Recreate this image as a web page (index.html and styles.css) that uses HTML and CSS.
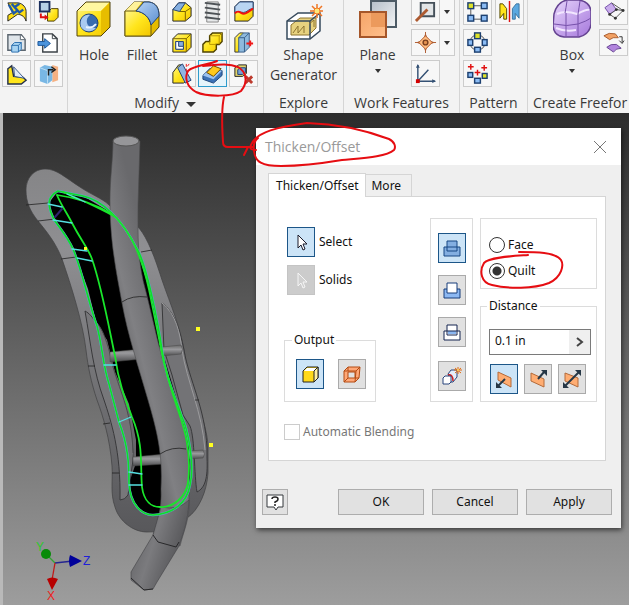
FILE: index.html
```html
<!DOCTYPE html>
<html lang="en">
<head>
<meta charset="utf-8">
<title>Thicken/Offset</title>
<link rel="stylesheet" href="styles.css">
</head>
<body>
<svg class="defs" aria-hidden="true">
  <defs>
    <linearGradient id="gold" x1="0" y1="0" x2="1" y2="1"><stop offset="0" stop-color="#fff58a"/><stop offset=".5" stop-color="#ffe51c"/><stop offset="1" stop-color="#f2c500"/></linearGradient>
    <linearGradient id="blue" x1="0" y1="0" x2="1" y2="1"><stop offset="0" stop-color="#b8d4f5"/><stop offset="1" stop-color="#5b8fd0"/></linearGradient>
    <linearGradient id="steel" x1="0" y1="0" x2="1" y2="1"><stop offset="0" stop-color="#b4bec8"/><stop offset="1" stop-color="#f4f5f6"/></linearGradient>
    <linearGradient id="orange" x1="0" y1="0" x2="1" y2="1"><stop offset="0" stop-color="#f5a468"/><stop offset="1" stop-color="#ffc08c"/></linearGradient>
    <linearGradient id="purple" x1="0" y1="0" x2="1" y2="1"><stop offset="0" stop-color="#e6d4fb"/><stop offset="1" stop-color="#a678dc"/></linearGradient>
  </defs>
</svg>

<header class="ribbon">
  <section class="panel panel-create">
    <div class="tools">
      <div class="grid two">
        <button class="tool" aria-label="Emboss"><svg viewBox="0 0 24 24"><path d="M3 3h11c5 1 8 5 8 9v10c-2-6-6-7-9-7l-10 7v-6l5-3z" fill="#ffdf12" stroke="#222"/><path d="M4 5l5 9 4-3M7 4l8 9 4-3M9 8l6-4" fill="none" stroke="#1f5aa8" stroke-width="2.5"/></svg></button>
        <button class="tool" aria-label="Derive"><svg viewBox="0 0 24 24"><path d="M11 13l4-4h7v9l-4 4h-7z" fill="url(#gold)" stroke="#4a3c00"/><rect x="3" y="2" width="10" height="10" fill="#b6d0e6" stroke="#1b2f5c" stroke-width="2"/><path d="M4 14v4h5" fill="none" stroke="#e01010" stroke-width="2"/><path d="M8 15l4 3-4 3z" fill="#e01010"/></svg></button>
        <button class="tool" aria-label="Decal"><svg viewBox="0 0 24 24"><path d="M3 4h14l4 5v11H3z" fill="#dfe5ea" stroke="#5c6670" stroke-width="1.5"/><path d="M16 4v5h5" fill="#fff" stroke="#5c6670"/><path d="M7 15l3-3h7v7l-3 3H7z" fill="#a8d4f2" stroke="#2c6fae"/><path d="M7 15h7v7M14 15l3-3" fill="none" stroke="#2c6fae"/></svg></button>
        <button class="tool" aria-label="Import"><svg viewBox="0 0 24 24"><path d="M6 3h10l5 5v14H6z" fill="#fff" stroke="#3d4348" stroke-width="1.5"/><path d="M16 3v5h5" fill="none" stroke="#3d4348"/><path d="M1 11h7V8l6 5-6 5v-3H1z" fill="#4c94dc" stroke="#1b5699"/></svg></button>
        <button class="tool" aria-label="Rib"><svg viewBox="0 0 24 24"><path d="M3 7l4-3 2 11 10 1 3 3-5 4H3z" fill="#ffe51c" stroke="#26324a" stroke-width="1.5"/><path d="M9 5l11 12-10-2z" fill="#dfeaf8" stroke="#395888"/></svg></button>
        <button class="tool" aria-label="Unwrap"><svg viewBox="0 0 24 24"><path d="M16 3l6 2v14l-6 2z" fill="#f5b183"/><path d="M3 6l5-3 8 2v14l-5 4-8-3z" fill="#79b7e4"/><path d="M3 6l8 3v14" fill="none" stroke="#bfe0f5"/><path d="M12 14V8h5M15 5l4 3-4 3" fill="none" stroke="#222" stroke-width="1.5"/></svg></button>
      </div>
    </div>
  </section>

  <section class="panel panel-modify">
    <div class="tools">
      <button class="big"><svg viewBox="0 0 38 38"><path d="M2 11L11 2h24v25l-9 9H2z" fill="url(#gold)"/><path d="M2 11L11 2h24l-9 9z" fill="#fff7a0"/><path d="M26 11l9-9v25l-9 9z" fill="#e7bd00"/><path d="M2 11L11 2h24v25l-9 9H2z" fill="none" stroke="#51430c"/><circle cx="14" cy="23" r="9" fill="#386cae" stroke="#214276"/><path d="M6 27C4 18 10 14 15 15q-4 3-3 8t9 5c-4 5-12 4-15-1z" fill="#a9caf0"/><path d="M11 27q6 2 10-3" stroke="#e8f3ff" stroke-width="2" fill="none"/></svg><span>Hole</span></button>
      <button class="big"><svg viewBox="0 0 38 38"><path d="M2 11l9-9h15c7 1 10 6 10 13v12l-8 9H2z" fill="#e5bb00" stroke="#51430c"/><path d="M2 11l9-9h8l-7 9z" fill="#fff29a"/><path d="M2 11h11c9 1 14 8 15 14v11H2z" fill="url(#gold)" stroke="#6b5a10"/><path d="M13 11l8-9h5c7 1 10 6 10 14l-8 9C27 18 21 12 13 11z" fill="url(#blue)" stroke="#214276"/></svg><span>Fillet</span></button>
      <div class="grid three">
        <button class="tool" aria-label="Chamfer"><svg viewBox="0 0 24 24"><path d="M3 10l6-7h7l6 5v9l-6 5H3z" fill="url(#gold)" stroke="#222"/><path d="M3 10l6-7h7l-6 9z" fill="#85afe0" stroke="#214276"/><path d="M10 12h6v10M16 12l6-4" fill="none" stroke="#765e00"/></svg></button>
        <button class="tool" aria-label="Thread"><svg viewBox="0 0 24 24"><path d="M6 2h12v21H6z" fill="#e6e8e9" stroke="#888"/><path d="M4 3l16 2M4 8l16 2M4 13l16 2M4 18l16 2" stroke="#4e5357" stroke-width="2"/></svg></button>
        <button class="tool" aria-label="Split"><svg viewBox="0 0 24 24"><path d="M3 7l5-5h14v15l-5 5H3z" fill="url(#gold)" stroke="#222"/><path d="M3 7l5-5h14v7c-5 0-6 4-10 4s-5-2-9 0z" fill="#b9d5f2" stroke="#214276"/><path d="M3 14c5-5 6 2 11 0s4-3 8-5" fill="none" stroke="#f01010" stroke-width="2"/></svg></button>
        <button class="tool" aria-label="Shell"><svg viewBox="0 0 24 24"><path d="M3 8l5-5h14v14l-5 5H3z" fill="url(#gold)" stroke="#222"/><path d="M17 8v14M3 8h14l5-5" fill="none" stroke="#7a6200"/><path d="M6 11h8v8H6z" fill="#86aee2" stroke="#214276"/><path d="M9 11v5h5v3H6v-8z" fill="#fff" stroke="#214276"/></svg></button>
        <button class="tool" aria-label="Combine"><svg viewBox="0 0 24 24"><path d="M9 5l3-3h10v9l-3 3h-3v5l-3 3H2v-8l3-3h4z" fill="url(#gold)" stroke="#4f4300" stroke-width="1.5"/><path d="M9 11v3h7M19 5v9M9 5h10l3-3" stroke="#b89700" fill="none"/></svg></button>
        <button class="tool" aria-label="Thicken"><svg viewBox="0 0 24 24"><path d="M3 7l5-5h4v15l-5 5H3z" fill="url(#gold)" stroke="#333"/><path d="M7 7l5-5h6v15l-5 5H7z" fill="#8eb9dd" stroke="#365d88"/><path d="M13 7l5-5M13 7v15M7 7h6" stroke="#365d88"/><path d="M15 13h7M19 10v6" fill="none" stroke="#ef1717" stroke-width="2"/></svg></button>
        <button class="tool" aria-label="Draft"><svg viewBox="0 0 24 24"><path d="M3 11l6-8h3l8 15-6 4H3z" fill="url(#gold)" stroke="#222"/><path d="M8 6l5-4 9 17-6 3z" fill="#8fb4e2" stroke="#214276"/><path d="M17 2v10M20 2l-3 4" stroke="#f01010" stroke-dasharray="3 2"/></svg></button>
        <button class="tool current" aria-label="Thicken/Offset"><svg viewBox="0 0 24 24"><path d="M2 14l7-7 13 2v5l-9 8-11-4z" fill="#3c72b7" stroke="#1c4479"/><path d="M2 14l7-7 13 2-9 9z" fill="#9bc2f0"/><path d="M6 11l7-7 8 3-8 8z" fill="#ffc91b" stroke="#6a4600"/></svg></button>
        <button class="tool" aria-label="Delete Face"><svg viewBox="0 0 24 24"><path d="M3 6l4-3h8v9l-4 3H3z" fill="#e2d36b" stroke="#222"/><path d="M6 8l3-2h5v5l-3 2H6z" fill="#77a2d5" stroke="#214276"/><path d="M14 15l7 7M21 15l-7 7" stroke="#bd3b2e" stroke-width="3"/></svg></button>
      </div>
    </div>
    <h2>Modify <span class="caret wide"></span></h2>
  </section>

  <section class="panel panel-explore">
    <div class="tools">
      <button class="big"><svg viewBox="0 0 38 38"><path d="M2 19l11-8h22v18l-10 8H2z" fill="#fff" stroke="#36495c" stroke-width="1.5"/><path d="M6 23l9-7h16v10l-7 7H6z" fill="#e7d27f" stroke="#8d7430"/><path d="M2 19h23v18M25 19l10-8" fill="none" stroke="#36495c" stroke-width="1.5"/><path d="M8 31l5-7v7l6-7v7M24 22l5-4v7" fill="none" stroke="#8d7430"/><path d="M32 2v14M25 9h14M27 4l10 10M37 4L27 14" stroke="#ef7626" stroke-width="1.5"/><circle cx="32" cy="9" r="3" fill="#ffe879" stroke="#ef7626"/></svg><span>Shape<br>Generator</span></button>
    </div>
    <h2>Explore</h2>
  </section>

  <section class="panel panel-work">
    <div class="tools">
      <button class="big"><svg viewBox="0 0 38 38"><path d="M12 1h25v26H12z" fill="url(#steel)" stroke="#4d5b66" stroke-width="2"/><path d="M1 12h26v25H1z" fill="url(#orange)" stroke="#a5562a" stroke-width="2"/><path d="M12 13h14v14H12z" fill="#ec9a5c"/></svg><span>Plane</span><i class="caret"></i></button>
      <div class="stack">
        <div class="split"><button class="tool" aria-label="Axis"><svg viewBox="0 0 24 24"><path d="M7 3h14v14H7z" fill="#e2e5e7" stroke="#45505a" stroke-width="2"/><path d="M2 22L14 10" stroke="#ad5a30" stroke-width="3"/></svg></button><button class="more" aria-label="Axis options"><i class="caret"></i></button></div>
        <div class="split"><button class="tool" aria-label="Point"><svg viewBox="0 0 24 24"><path d="M12 1v22M1 12h22" stroke="#ad5a30"/><path d="M12 4q1 7 8 8-7 1-8 8-1-7-8-8 7-1 8-8z" fill="#ffbd82" stroke="#ad5a30" stroke-width="1.5"/><path d="M12 5l7 7-7 7-7-7z" fill="#ffbd82" stroke="#ad5a30"/><circle cx="12" cy="12" r="2.5" fill="#e39150" stroke="#7a3f1e" stroke-width="1.5"/></svg></button><button class="more" aria-label="Point options"><i class="caret"></i></button></div>
        <button class="tool" aria-label="UCS"><svg viewBox="0 0 24 24"><path d="M4 20V3M4 20h18M4 20L15 8" fill="none" stroke="#345174" stroke-width="1.5"/><path d="M2 6l2-4 2 4M19 18l4 2-4 2" fill="#345174"/><rect x="2" y="18" width="4" height="4" fill="#d40000"/></svg></button>
      </div>
    </div>
    <h2>Work Features</h2>
  </section>

  <section class="panel panel-pattern">
    <div class="tools">
      <div class="grid two">
        <button class="tool" aria-label="Rectangular Pattern"><svg viewBox="0 0 24 24"><path d="M5 6h15M5 6v14h15" fill="none" stroke="#555"/><g fill="#8bbcf5" stroke="#1d4070" stroke-width="1.5"><rect x="2" y="3" width="6" height="6" fill="#dfe32a"/><rect x="16" y="3" width="6" height="6"/><rect x="2" y="16" width="6" height="6"/><rect x="16" y="16" width="6" height="6"/></g></svg></button>
        <button class="tool" aria-label="Mirror"><svg viewBox="0 0 24 24"><path d="M2 4h3l4 5v11H6v-6l-4 5z" fill="#ffe51c" stroke="#524700"/><path d="M22 4h-3l-4 5v11h3v-6l4 5z" fill="#5ba8e0" stroke="#3c74a0"/><path d="M12 1v22" stroke="#e01010" stroke-width="1.5"/></svg></button>
        <button class="tool" aria-label="Circular Pattern"><svg viewBox="0 0 24 24"><circle cx="12" cy="12" r="8" fill="none" stroke="#555"/><g fill="#8bbcf5" stroke="#1d4070" stroke-width="1.5"><rect x="9" y="2" width="6" height="6" fill="#dfe32a"/><rect x="2" y="9" width="5" height="6"/><rect x="17" y="9" width="5" height="6"/><rect x="9" y="17" width="6" height="5"/></g></svg></button>
        <span></span>
        <button class="tool" aria-label="Sketch Driven Pattern"><svg viewBox="0 0 24 24"><g fill="#8bbcf5" stroke="#1d4070" stroke-width="1.5"><rect x="2" y="11" width="5" height="5"/><rect x="9" y="17" width="6" height="5"/><rect x="17" y="12" width="5" height="5" fill="#dfe32a"/></g><path d="M5 2v6M2 5h6M12 8v6M9 11h6M19 3v6M16 6h6" stroke="#e01010" stroke-width="1.5"/></svg></button>
      </div>
    </div>
    <h2>Pattern</h2>
  </section>

  <section class="panel panel-freeform">
    <div class="tools">
      <button class="big"><svg viewBox="0 0 38 38"><path d="M1 14Q4 2 14 0h12q11 2 12 11v13q-1 10-12 13H11Q1 36 0 26z" fill="url(#purple)" stroke="#654391" stroke-width="1.5"/><path d="M4 14q8-4 20 0 10-5 12-4M3 28q9 4 20 2" fill="none" stroke="#f2e6ff" stroke-width="2"/><path d="M1 24q13 3 24 0 9-3 13-6M13 13v23M25 14v22M14 1q-1 7-2 12M27 1q-1 7-2 13" fill="none" stroke="#7651aa"/></svg><span>Box</span><i class="caret"></i></button>
      <div class="grid one">
        <button class="tool" aria-label="Face"><svg viewBox="0 0 24 24"><path d="M3 8l7-5 5 7-7 5z" fill="#c9acec" stroke="#7651aa"/><path d="M10 3l12 8-8 8-6-4 7-5 7 1" fill="none" stroke="#555"/><g fill="#333"><circle cx="8" cy="15" r="1.5"/><circle cx="15" cy="10" r="1.5"/><circle cx="22" cy="11" r="1.5"/><circle cx="14" cy="19" r="1.5"/></g></svg></button>
        <button class="tool" aria-label="Convert"><svg viewBox="0 0 24 24"><path d="M2 5q5-4 12-2l3 4q-6-1-9 2z" fill="#f2a164" stroke="#a75c2f"/><path d="M5 17q4-4 10-3l5 4q-6 0-8 4z" fill="#b184dd" stroke="#654391"/><path d="M18 6h3v6M18 10l3 3 2-3" fill="none" stroke="#333"/></svg></button>
      </div>
    </div>
    <h2>Create Freefor</h2>
  </section>
</header>

<main class="viewport">
  <svg class="model" viewBox="0 113 250 492" role="img" aria-label="Part model with thickened surface preview">
    <defs>
      <linearGradient id="shell" x1="0" y1="0" x2="0" y2="1"><stop offset="0" stop-color="#858587"/><stop offset=".22" stop-color="#8f8f92"/><stop offset=".6" stop-color="#717174"/><stop offset="1" stop-color="#58585b"/></linearGradient>
      <linearGradient id="tube" gradientUnits="userSpaceOnUse" x1="108" y1="350" x2="168" y2="335"><stop offset=".05" stop-color="#59595b"/><stop offset=".5" stop-color="#808083"/><stop offset="1" stop-color="#69696c"/></linearGradient>
      <linearGradient id="pin" x1="0" y1="0" x2="0" y2="1"><stop offset="0" stop-color="#666"/><stop offset=".4" stop-color="#9a9a9d"/><stop offset="1" stop-color="#4b4b4d"/></linearGradient>
      <linearGradient id="foot" x1="0" y1="0" x2="1" y2=".5"><stop offset="0" stop-color="#58585b"/><stop offset=".5" stop-color="#7b7b7e"/><stop offset="1" stop-color="#4f4f52"/></linearGradient>
    </defs>
    <path d="M26 190C26 178 34 169 45 169C57 169 64 177 83 189C96 197 104 199 112 208L139 228C148 239 155 258 162 280C171 306 180 326 184 350C187 371 192 386 197 400C203 420 208 435 208 447V473C207 491 199 510 187 518C176 529 161 532 147 532C133 532 119 521 115 507C110 493 113 481 112 466C110 439 103 416 97 400C91 382 88 367 86 350C83 323 71 285 62 259C56 243 47 232 38 221C30 211 26 202 26 190Z" fill="url(#shell)" stroke="#404042" stroke-width=".7"/>
    <path d="M85 311C93 315 101 329 108 350L114 382C123 405 133 425 133 460L128 495Q125 500 120 500C121 451 111 421 104 400C93 370 91 345 85 311Z" fill="#77777a" stroke="#39393b"/>
    <path d="M162 303C174 312 179 326 184 350C189 380 205 407 207 448V458C208 478 205 488 197 492C194 475 195 438 190 426L183 415L172 375L164 350Z" fill="#737376" stroke="#39393b"/>
    <path d="M162 303C176 314 180 333 182 350C187 382 202 411 205 450" fill="none" stroke="#9b9b9d"/>
    <path d="M58 191L48 204L55 221L73 249L88 289L97 326L107 340L115 372L129 404L136 440V463L129 483C130 505 142 515 153 515C170 515 185 505 189 487L191 457L182 417L162 350L152 299L137 249L117 216L83 196Z" fill="#000"/>
    <path d="M97 323C103 330 106 340 109 350L113 367C121 394 132 414 133 453L130 471L128 453L119 422L109 384L103 356Z" fill="#737376"/>
    <path d="M97 323C103 330 106 340 109 350L113 367C121 394 132 414 133 453" fill="none" stroke="#4a4a4c"/>
    <g stroke="#484849" stroke-width=".5"><path d="M110 352l53-5v10l-53 5z" fill="url(#pin)"/><path d="M162 347l19-2q3 4 0 9l-19 2z" fill="url(#pin)"/><path d="M133 457l32-3v10l-32 2z" fill="url(#pin)"/><path d="M188 451l15-1q3 4 0 8l-15 1z" fill="url(#pin)"/></g>
    <path d="M113 141C113 160 110 178 110 200C110 244 117 275 122 303C128 336 138 365 148 400C157 431 163 454 161 489C162 510 157 523 153 535L180 546C184 530 189 520 189 505V465C187 425 177 407 170 385C160 354 153 320 146 292C137 261 138 235 138 205L140 141Z" fill="url(#tube)" stroke="#4c4c4e" stroke-width=".6"/>
    <ellipse cx="126" cy="141" rx="13" ry="5" fill="#969699" stroke="#555"/>
    <path d="M161 507L153 535L131 572V580L144 590L153 589L157 582L179 546C183 533 188 523 189 500Q178 511 161 507Z" fill="url(#foot)" stroke="#424244" stroke-width=".6"/>
    <path d="M153 535l5 7 18 5 3-5M131 578l13 12 9-1" fill="none" stroke="#28282a"/>
    <path d="M26 205l22-2M38 221l17-2M61 259l15-2M122 302q10-7 25-5M160 454q12-8 26-5M141 252l11-2M88 366h7M103 424l7-1M112 473h7M195 400h4" fill="none" stroke="#222" stroke-width=".8"/>
    <g fill="none" stroke-linecap="round">
      <path d="M58 191C49 196 45 203 55 221C62 231 67 236 73 249C82 270 88 301 97 326C103 350 103 366 109 384L119 422C128 445 129 464 129 483C130 505 142 515 153 515C173 514 187 503 190 485C195 465 188 430 182 417C174 394 165 374 162 350C158 321 146 263 137 249C122 219 102 200 83 196Z" stroke="#5aa8cf" stroke-width="2.4"/>
      <path d="M58 191C49 196 45 203 55 221C62 231 67 236 73 249C82 270 88 301 97 326C103 350 103 366 109 384L119 422C128 445 129 464 129 483C130 505 142 515 153 515C173 514 187 503 190 485C195 465 188 430 182 417C174 394 165 374 162 350C158 321 146 263 137 249C122 219 102 200 83 196Z" stroke="#0ee025" stroke-width="1.6"/>
      <path d="M57 195C61 205 67 213 72 223C82 242 88 248 92 259C102 288 109 328 115 356C119 385 126 401 132 417C144 445 140 465 142 487C144 502 152 507 160 507C174 508 186 496 188 483C192 449 183 425 179 413C168 381 163 360 160 344" stroke="#19e62b" stroke-width="1.8"/>
      <path d="M57 195Q87 199 112 214C133 232 143 263 149 290L160 344M63 192Q100 208 117 218" stroke="#19e62b" stroke-width="1.5"/>
      <path d="M48 204l14 3M53 220l19 3M72 249l15 2M77 258l15 3M104 365h12M119 422l12-5M129 472l13 2M129 485h13M67 194l18 8" stroke="#55dfe1" stroke-width="1.3"/>
      <path d="M55 217l7-8" stroke="#302070" stroke-width="2"/>
    </g>
    <g fill="#ffff20"><rect x="84" y="247" width="3" height="3"/><rect x="196" y="327" width="4" height="4"/><rect x="209" y="443" width="4" height="4"/></g>
    <g stroke-width="1.3"><path d="M55 563l-8-8" stroke="#32a432"/><path d="M55 563l18-2" stroke="#252590"/><path d="M55 563l-3 17" stroke="#c01818"/></g>
    <circle cx="46" cy="554" r="5" fill="#078b08"/><path d="M70 555l12 6-12 6q-2-6 0-12z" fill="#00009a"/><path d="M47 579q5-3 11 0l-6 11z" fill="#b70000"/>
    <g class="axis"><text x="36" y="551" fill="#2cc82c">Y</text><text x="83" y="565" fill="#2020d8">Z</text><text x="47" y="600" fill="#ef2020">X</text></g>
  </svg>

  <form class="dialog" aria-labelledby="dialog-title">
    <div class="titlebar"><h1 id="dialog-title">Thicken/Offset</h1><button type="button" class="close" aria-label="Close"><svg viewBox="0 0 14 14"><path d="M1 1l12 12M13 1L1 13" stroke="#777"/></svg></button></div>
    <div class="tabs"><button type="button" class="tab active">Thicken/Offset</button><button type="button" class="tab">More</button></div>
    <div class="page">
      <div class="columns">
        <div class="left">
          <div class="pick"><button type="button" id="pick-face" class="icon on"><svg viewBox="0 0 20 20"><path d="M7 3v13l3-3 2 5 2-1-2-5h4z" fill="#fff" stroke="#1b1b2b"/></svg></button><label for="pick-face">Select</label></div>
          <div class="pick"><button type="button" id="pick-solid" class="icon off"><svg viewBox="0 0 20 20"><path d="M7 3v13l3-3 2 5 2-1-2-5h4z" fill="#d0d0d0" stroke="#f5f5f5"/></svg></button><label for="pick-solid">Solids</label></div>
          <fieldset class="output"><legend>Output</legend>
            <button type="button" class="icon on" aria-label="Solid"><svg viewBox="0 0 20 20"><path d="M3 7l4-4h11v11l-4 4H3z" fill="#ffd91a" stroke="#222"/><path d="M4 7l3-3h10l-3 3z" fill="#fff"/><path d="M14 7l4-4v11l-4 4z" fill="#fff0a0" stroke="#222"/></svg></button>
            <button type="button" class="icon" aria-label="Surface"><svg viewBox="0 0 20 20"><path d="M2 7l4-4h12l-1 11-4 4H2zM6 8v6h7V8z" fill="#ffa878" fill-rule="evenodd" stroke="#b34b13"/><path d="M2 7h12l4-4M14 7l-1 11M6 3v4M2 18l4-4M13 14h4" fill="none" stroke="#b34b13"/></svg></button>
          </fieldset>
        </div>
        <div class="operations">
          <button type="button" class="icon on" aria-label="Join"><svg viewBox="0 0 20 20"><path d="M2 9h3V3h10v6h3v9H2z" fill="#83aee1" stroke="#174783"/><path d="M5 9v4h10V9M5 9h10" fill="none" stroke="#174783"/></svg></button>
          <button type="button" class="icon" aria-label="Cut"><svg viewBox="0 0 20 20"><path d="M2 9h16v9H2z" fill="#8cb8f2" stroke="#173d7a"/><path d="M5 3h10v10H5z" fill="#fff" stroke="#173d7a"/></svg></button>
          <button type="button" class="icon" aria-label="Intersect"><svg viewBox="0 0 20 20"><path d="M2 9h16v9H2z" fill="#fff" stroke="#152550"/><path d="M5 3h10v10H5z" fill="#fff" stroke="#152550"/><path d="M6 9h8v3H6z" fill="#8cb8f2"/><path d="M5 9h10" stroke="#152550"/></svg></button>
          <button type="button" class="icon last" aria-label="New solid"><svg viewBox="0 0 20 20"><path d="M6 8l3-4h6v7l-4 5H9z" fill="#e4edf9" stroke="#28457c"/><path d="M6 9q5-1 5 6" fill="none" stroke="#d02020" stroke-width="1.5"/><path d="M1 12l2-2h6v6l-2 2H1z" fill="#fff" stroke="#28457c"/><path d="M16 1v7M12 4h8M13 2l6 5M19 2l-6 5" stroke="#e06b12"/><circle cx="16" cy="4" r="1" fill="#ffe56b"/></svg></button>
        </div>
        <div class="right">
          <div class="kind"><label><input type="radio" name="kind">Face</label><label><input type="radio" name="kind" checked>Quilt</label></div>
          <fieldset class="distance"><legend>Distance</legend>
            <div class="combo"><input type="text" aria-label="Distance" value="0.1 in"><button type="button" aria-label="Distance options"><svg viewBox="0 0 8 10"><path d="M1 1l5 4-5 4" fill="none" stroke="#444" stroke-width="2"/></svg></button></div>
            <div class="directions">
              <button type="button" class="icon on" aria-label="Direction 1"><svg viewBox="0 0 20 20"><path d="M4 3l13 6v9L4 11z" fill="#ffad72" stroke="#b36a3a"/><path d="M11 10l-7 7" stroke="#263746" stroke-width="2"/><path d="M2 13v6h6z" fill="#263746"/></svg></button>
              <button type="button" class="icon" aria-label="Direction 2"><svg viewBox="0 0 20 20"><path d="M3 4l13 6v8L3 12z" fill="#ffad72" stroke="#b36a3a"/><path d="M10 10l6-7" stroke="#263746" stroke-width="2"/><path d="M13 1h6v6z" fill="#263746"/></svg></button>
              <button type="button" class="icon" aria-label="Symmetric"><svg viewBox="0 0 20 20"><path d="M3 4l13 5v9L3 12z" fill="#ffad72" stroke="#b36a3a"/><path d="M3 17L17 3" stroke="#263746" stroke-width="2"/><path d="M13 1h6v6zM1 13v6h6z" fill="#263746"/></svg></button>
            </div>
          </fieldset>
        </div>
      </div>
      <label class="blend"><input type="checkbox" disabled>Automatic Blending</label>
    </div>
    <div class="footer">
      <button type="button" class="help" aria-label="Help"><svg viewBox="0 0 18 18"><path d="M1 2h16v12h-5l-2 3-2-3H1z" fill="#fff" stroke="#34383c"/><path d="M6 6q0-2 3-2t3 2-3 3v1M9 11v2" fill="none" stroke="#222" stroke-width="1.5"/></svg></button>
      <button type="button">OK</button><button type="button">Cancel</button><button type="button">Apply</button>
    </div>
  </form>
</main>

<svg class="markup" viewBox="0 0 629 605" aria-hidden="true">
  <path d="M217 61C209 65 194 65 188 71C184 78 187 87 196 92C207 97 233 97 241 91C248 83 247 72 238 67C228 63 216 65 203 66"/>
  <path d="M224 97C221 110 222 127 223 142Q223 147 228 147L253 147M248 147L244 155"/>
  <path d="M256 150C250 150 249 148 252 143C258 132 277 127 307 123C338 124 365 130 389 139C395 142 396 147 394 150C386 157 363 158 342 160C318 164 301 166 281 166C262 166 255 162 254 151C253 145 254 141 258 138"/>
  <path d="M528 255C514 256 489 257 484 263C479 271 481 283 492 285C509 289 533 289 549 283C562 277 564 265 561 260C555 252 536 252 519 252"/>
</svg>
</body>
</html>
```

FILE: styles.css
```css
* { box-sizing: border-box; }

body {
  margin: 0;
  position: relative;
  min-height: 100vh;
  display: flex;
  flex-direction: column;
  overflow: hidden;
  font-family: "Noto Sans", sans-serif;
  font-size: 12px;
  line-height: 16px;
  color: #111;
}

button, input { font: inherit; color: inherit; }
button { padding: 0; margin: 0; border: 0; background: none; }
svg { display: block; }
h1, h2 { margin: 0; font-weight: 400; }
.defs { position: absolute; width: 0; height: 0; }

/* Ribbon */
.ribbon {
  display: flex;
  height: 113px;
  overflow: hidden;
  background: #f3f3f3;
  font-family: "Open Sans", sans-serif;
  font-size: 14px;
  line-height: 20px;
  color: #3a3a3a;
}
.panel {
  flex: none;
  display: flex;
  flex-direction: column;
  justify-content: space-between;
  border-right: 1px solid #d5d5d5;
  white-space: nowrap;
}
.panel h2 {
  font-size: 14px;
  text-align: center;
}
.tools { display: flex; }
.panel-create { width: 68px; padding-left: 2px; }
.panel-modify { width: 196px; padding-left: 2px; }
.panel-modify h2 { padding-right: 3px; }
.panel-explore { width: 80px; }
.panel-work { width: 116px; }
.panel-pattern { width: 68px; padding-left: 3px; }
.panel-pattern h2 { padding-right: 3px; }
.panel-freeform { flex: 1 0 101px; border-right: 0; }
.panel-freeform h2 { text-align: left; padding-left: 5px; }

.grid, .stack {
  display: grid;
  gap: 4px 2px;
  grid-auto-rows: 27px;
  margin-top: -2px;
}
.two { grid-template-columns: 29px 29px; column-gap: 3px; }
.three { grid-template-columns: 29px 29px 29px; padding-left: 1px; }
.tool, .more {
  width: 29px;
  height: 27px;
  display: grid;
  place-items: center;
  border: 1px solid #ccc;
  background: #f7f7f7;
}
.tool svg { width: 23px; height: 23px; }
.tool.current { border-color: #2e9bcc; background: #e6f4fb; }
.split { display: flex; }
.more { width: 15px; border-left: 0; }

.big {
  flex: none;
  width: 48px;
  display: flex;
  flex-direction: column;
  align-items: center;
}
.big svg { width: 38px; height: 38px; margin-bottom: 7px; }
.panel-explore .big { width: 79px; }
.panel-explore .big svg { margin: 2px 0 5px; }
.panel-work .big { width: 67px; }
.panel-freeform .big { width: 71px; padding-left: 17px; }
.caret {
  border: 3px solid transparent;
  border-top: 4px solid #333;
  border-bottom: 0;
}
.big .caret { margin-top: 4px; }
.caret.wide {
  display: inline-block;
  border-width: 5px 5px 0;
  margin-left: 3px;
  vertical-align: middle;
}

/* Model view */
.viewport {
  flex: 1;
  position: relative;
  min-height: 492px;
  border-left: 3px solid #b9b9b9;
  background: linear-gradient(#2c2c2c, #656565 50%, #9d9d9d);
}
.model {
  position: absolute;
  top: 0;
  left: -3px;
  width: 250px;
  height: 492px;
}
.axis { font: 12px "Liberation Sans", sans-serif; }

/* Dialog window */
.dialog {
  position: absolute;
  top: 15px;
  left: 253px;
  width: 365px;
  padding-bottom: 13px;
  background: #efefef;
  box-shadow: 1px 2px 5px rgba(0, 0, 0, .6);
}
.titlebar {
  display: flex;
  align-items: center;
  justify-content: space-between;
  height: 37px;
  padding: 0 14px 0 9px;
  background: #fff;
}
.titlebar h1 { font: 14px/20px "Open Sans", sans-serif; color: #999; }
.close svg { width: 14px; height: 14px; }
.tabs {
  display: flex;
  align-items: flex-end;
  padding: 8px 12px 0;
}
.tab {
  height: 22px;
  padding: 0 10px 0 5px;
  border: 1px solid #d5d5d5;
  border-width: 1px 1px 0 0;
  background: #efefef;
}
.tab.active {
  position: relative;
  height: 24px;
  padding: 0 7px;
  border-left-width: 1px;
  background: #fff;
  margin-bottom: -1px;
}
.page {
  margin: 0 15px 0 12px;
  padding: 21px 8px 20px 15px;
  border: 1px solid #d5d5d5;
  background: #fff;
}
.columns {
  display: grid;
  grid-template-columns: 1fr 43px 117px;
  column-gap: 7px;
}
.left {
  display: flex;
  flex-direction: column;
  align-items: flex-start;
  justify-content: space-between;
  gap: 8px;
  padding-top: 9px;
}
.pick {
  display: flex;
  align-items: center;
  gap: 4px;
  margin-left: 3px;
}
.icon {
  width: 28px;
  height: 30px;
  display: grid;
  place-items: center;
  border: 1px solid #aaa;
  background: #e1e1e1;
}
.icon svg { width: 20px; height: 20px; }
.icon.on { border-color: #1c5688; background: #cce4f7; }
.icon.off { border-color: #c4c4c4; background: #ccc; }
fieldset {
  margin: 0;
  min-width: 0;
  border: 1px solid #dcdcdc;
}
legend { padding: 0 2px; margin-left: -4px; }
.output {
  display: flex;
  gap: 14px;
  margin-top: auto;
  padding: 11px 9px 12px 11px;
}
.operations {
  display: flex;
  flex-direction: column;
  align-items: center;
  gap: 12px;
  padding: 14px 0 10px;
  border: 1px solid #dcdcdc;
}
.operations .last { margin-top: 2px; }
.right {
  display: flex;
  flex-direction: column;
  gap: 9px;
}
.kind {
  display: flex;
  flex-direction: column;
  gap: 10px;
  padding: 18px 8px 9px;
  border: 1px solid #dcdcdc;
}
.kind label, .blend {
  display: flex;
  align-items: center;
  gap: 3px;
}
input[type="radio"], input[type="checkbox"] {
  appearance: none;
  width: 16px;
  height: 16px;
  margin: 0;
  border: 1px solid #333;
  background: #fff;
}
input[type="radio"] { border-radius: 50%; }
input[type="radio"]:checked { background: radial-gradient(circle, #333 4px, #fff 5px); }
input[type="checkbox"] { border-color: #ccc; }
.blend { margin-top: 22px; color: #777; }
.distance { padding: 15px 5px 7px 8px; }
.distance legend { margin-left: -2px; }
.combo {
  display: flex;
  height: 26px;
  border: 1px solid #7a7a7a;
}
.combo input {
  flex: 1;
  min-width: 0;
  padding: 0 5px 2px;
  border: 0;
  background: #fff;
}
.combo button {
  width: 21px;
  display: grid;
  place-items: center;
  background: #efefef;
}
.combo svg { width: 8px; height: 10px; }
.directions {
  display: flex;
  justify-content: space-between;
  padding: 9px 5px 0 1px;
}
.footer {
  display: flex;
  gap: 8px;
  padding: 28px 9px 0 6px;
}
.footer button {
  width: 86px;
  height: 26px;
  border: 1px solid #adadad;
  background: #e1e1e1;
}
.footer .help {
  width: 26px;
  margin-right: auto;
  display: grid;
  place-items: center;
}
.help svg { width: 18px; height: 18px; }

/* Hand-drawn markup over the window */
.markup {
  position: absolute;
  top: 0;
  left: 0;
  width: 629px;
  height: 605px;
  pointer-events: none;
  fill: none;
  stroke: #e60d12;
  stroke-width: 2;
  stroke-linecap: round;
  stroke-linejoin: round;
}
```
